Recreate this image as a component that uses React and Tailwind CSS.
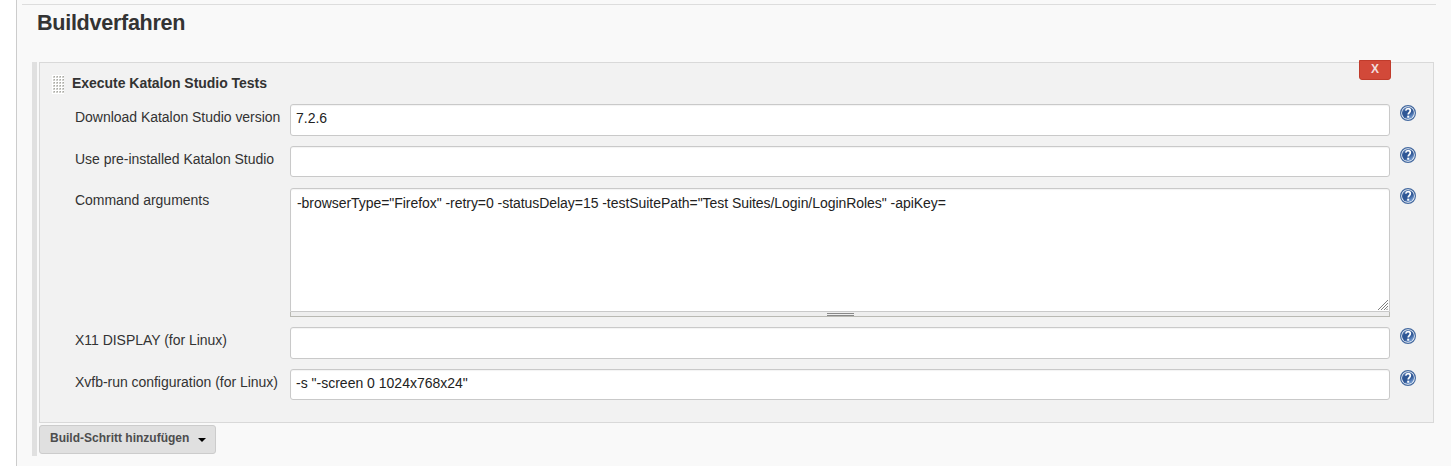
function HelpIcon() {
  return (
    <svg className="block h-4 w-4" viewBox="0 0 16 16" aria-label="Hilfe">
      <defs>
        <linearGradient id="help-blue" x1="0" y1="0" x2="0.7" y2="1">
          <stop offset="0" stopColor="#7d9ccb" />
          <stop offset="0.35" stopColor="#2f5796" />
          <stop offset="0.65" stopColor="#2f5796" />
          <stop offset="1" stopColor="#7fa6da" />
        </linearGradient>
      </defs>
      <circle cx="8" cy="8" r="7.4" fill="#f4f7fb" stroke="#44699f" strokeWidth="1.2" />
      <circle cx="8" cy="8" r="6" fill="url(#help-blue)" />
      <path d="M5.7 5.6C6 4.2 6.9 3.7 8.1 3.7c1.4 0 2.2.8 2.2 2 0 1.7-2.1 2-2.1 3.9" fill="none" stroke="#fff" strokeWidth="1.7" />
      <rect x="7.2" y="10.7" width="2" height="2" fill="#fff" />
    </svg>
  );
}

function Grip() {
  return (
    <svg className="block" width="12" height="19" viewBox="0 0 12 19" aria-hidden="true">
      <defs>
        <pattern id="grip-dot" width="3" height="3" patternUnits="userSpaceOnUse">
          <rect width="3" height="3" fill="#fff" />
          <rect x="1" y="1" width="2" height="2" fill="#cfcfcb" />
          <rect x="2" y="1" width="1" height="1" fill="#a9a9a4" />
        </pattern>
      </defs>
      <rect width="12" height="19" fill="url(#grip-dot)" />
    </svg>
  );
}

function Row({ label, className, sideClass = "pt-1", iconClass = "pt-px", children }) {
  return (
    <div className={"flex items-start " + className}>
      <div className={"w-[215px] shrink-0 leading-[18px] tracking-[-0.03px] whitespace-nowrap " + sideClass}>{label}</div>
      <div className="w-[1100px] shrink-0">{children}</div>
      <div className={"ml-[10px] " + iconClass}>
        <HelpIcon />
      </div>
    </div>
  );
}

function Field({ value = "", className = "h-8" }) {
  return (
    <div
      className={
        "rounded-[3px] border border-[#c9c9c9] bg-white pl-[5px] pt-1 leading-[18px] text-[#222] shadow-[inset_0_1px_1px_rgba(0,0,0,0.05)] " +
        className
      }
    >
      {value}
    </div>
  );
}

export default function App() {
  return (
    <div className="flex h-[466px] w-[1451px] overflow-hidden bg-white pl-4 font-['Liberation_Sans',Arial,sans-serif] text-[14px] text-[#333]">
      <main className="flex-1 border-l border-[#ccc] bg-[#f9f9f9] pt-1">
        <div className="ml-[5px] h-px w-[1414px] bg-[#ddd]" />
        <h2 className="ml-5 mt-[5px] h-[52px] text-[21.6px] leading-[25px] font-bold tracking-[-0.3px]">Buildverfahren</h2>
        <div className="ml-[15px] h-[394px] border-l-[5px] border-[#e0e0e0] pl-[2px]">
          <section className="h-[361px] w-[1395px] border border-[#d9d9d9] bg-[#f2f2f2]">
            <div className="flex h-[41px] items-start">
              <div className="ml-[12px] mt-[12px]">
                <Grip />
              </div>
              <h3 className="ml-[8px] mt-[11px] flex-1 leading-[18px] font-bold tracking-[-0.03px]">Execute Katalon Studio Tests</h3>
              <button className="relative -top-[3px] mr-[42px] h-5 w-8 rounded-b-[3px] border border-[#c03b2b] bg-[#d24939] pb-[2px] text-[12px] leading-[16px] font-bold text-[#f2dddd]">
                X
              </button>
            </div>
            <div className="ml-[35px]">
              <Row label="Download Katalon Studio version" className="h-[42px]">
                <Field value="7.2.6" />
              </Row>
              <Row label="Use pre-installed Katalon Studio" className="h-[42px]">
                <Field className="h-[31px]" />
              </Row>
              <Row label="Command arguments" className="h-[139px]" sideClass="pt-[3px]" iconClass="pt-0">
                <div className="h-[124px] rounded-t-[3px] border border-[#c9c9c9] bg-white shadow-[inset_0_1px_1px_rgba(0,0,0,0.05)]">
                  <div className="flex h-full flex-col justify-between pl-[6px] text-[#222]">
                    <span className="pt-[5px] leading-[18px] tracking-[-0.048px]">
                      {'-browserType="Firefox" -retry=0 -statusDelay=15 -testSuitePath="Test Suites/Login/LoginRoles" -apiKey='}
                    </span>
                    <svg className="mr-px mb-px self-end" width="10" height="10" viewBox="0 0 10 10" aria-hidden="true">
                      <path d="M0 10L10 0M3 10l7-7M6 10l4-4M8.5 10l1.5-1.5" stroke="#808080" strokeWidth="1" />
                    </svg>
                  </div>
                </div>
                <div className="flex h-[5px] justify-center border-r border-b border-l border-[#b9b9b3] bg-[#eee]">
                  <div className="mt-px h-[3px] w-[27px] border-y border-[#888]" />
                </div>
              </Row>
              <Row label="X11 DISPLAY (for Linux)" className="h-[42px]">
                <Field />
              </Row>
              <Row label="Xvfb-run configuration (for Linux)" className="h-[42px]">
                <Field value={'-s "-screen 0 1024x768x24"'} className="h-[31px]" />
              </Row>
            </div>
          </section>
          <button className="mt-[2px] flex h-[29px] w-[177px] items-center rounded-[3px] border border-[#ccc] bg-[#e0e0e0] pb-[4px] pl-[10px] text-[12px] font-bold text-[#4d4d4d]">
            <span>Build-Schritt hinzufügen</span>
            <svg className="mt-1 ml-[9px]" width="8" height="4" viewBox="0 0 8 4" aria-hidden="true">
              <path d="M0 0h8L4 4z" fill="#000" />
            </svg>
          </button>
        </div>
      </main>
    </div>
  );
}
